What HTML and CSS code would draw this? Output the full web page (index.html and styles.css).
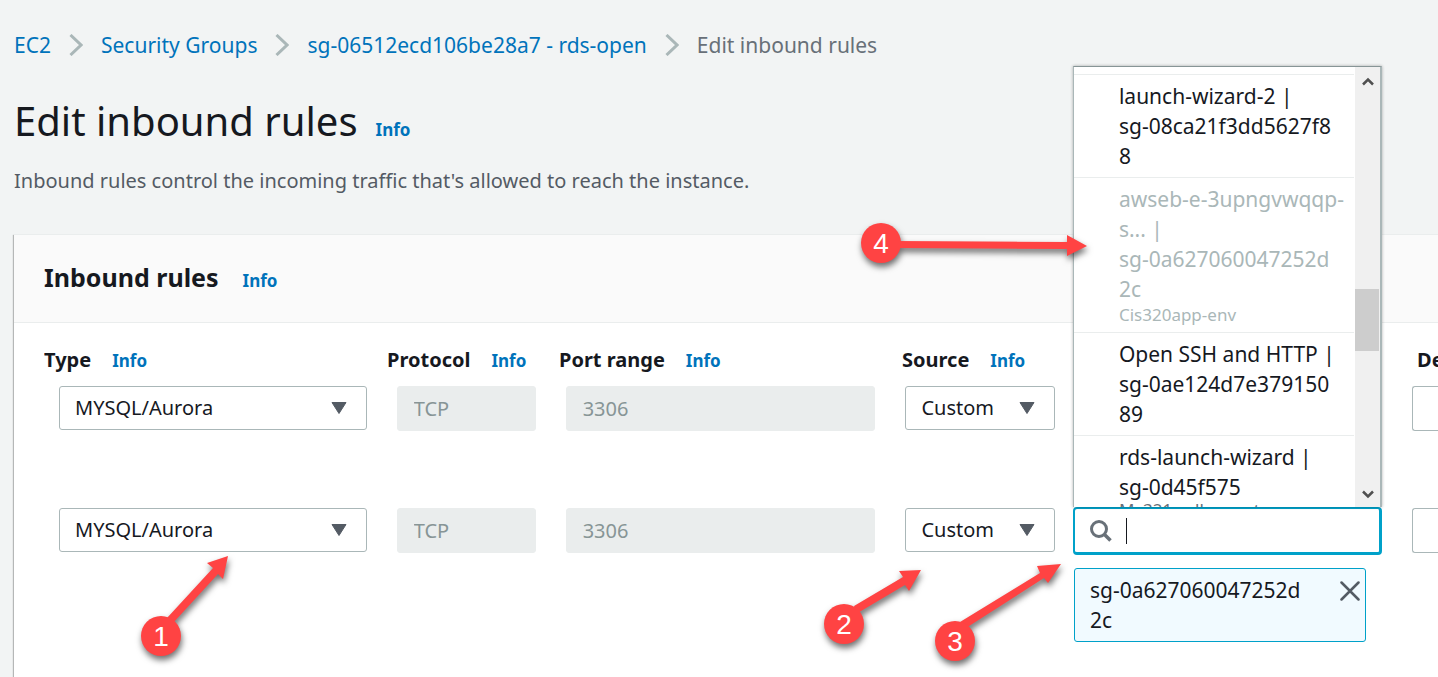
FILE: index.html
```html
<!DOCTYPE html>
<html lang="en">
<head>
<meta charset="utf-8">
<title>Edit inbound rules</title>
<link rel="stylesheet" href="styles.css">
</head>
<body>
<svg class="defs" width="0" height="0" aria-hidden="true">
  <symbol id="chevron" viewBox="0 0 14 22"><path d="M1.500 1 12 11 1.500 21" fill="none" stroke="#aab7b8" stroke-width="3"/></symbol>
  <symbol id="caret" viewBox="0 0 16 12"><path d="M1 .5h14L8 11.500z" fill="#545b64" stroke="#545b64" stroke-linejoin="round"/></symbol>
</svg>
<main class="page">
  <nav class="crumbs" aria-label="Breadcrumb">
    <a href="#">EC2</a>
    <svg class="chevron"><use href="#chevron"/></svg>
    <a href="#">Security Groups</a>
    <svg class="chevron"><use href="#chevron"/></svg>
    <a href="#">sg-06512ecd106be28a7 - rds-open</a>
    <svg class="chevron"><use href="#chevron"/></svg>
    <span class="current">Edit inbound rules</span>
  </nav>
  <header class="heading">
    <h1>Edit inbound rules</h1>
    <a class="info" href="#">Info</a>
  </header>
  <p class="lead">Inbound rules control the incoming traffic that's allowed to reach the instance.</p>

  <section class="panel">
    <header class="panel-head">
      <h2>Inbound rules</h2>
      <a class="info" href="#">Info</a>
    </header>
    <div class="labels">
      <div class="label"><span id="l-type">Type</span><a class="info" href="#">Info</a></div>
      <div class="label"><span id="l-proto">Protocol</span><a class="info" href="#">Info</a></div>
      <div class="label"><span id="l-port">Port range</span><a class="info" href="#">Info</a></div>
      <div class="label"><span id="l-source">Source</span><a class="info" href="#">Info</a></div>
      <div class="label"><span id="l-desc">Description</span></div>
    </div>
    <div class="rule">
      <div class="select"><select aria-labelledby="l-type"><option>MYSQL/Aurora</option></select><svg><use href="#caret"/></svg></div>
      <input class="field" aria-labelledby="l-proto" value="TCP" disabled>
      <input class="field" aria-labelledby="l-port" value="3306" disabled>
      <div class="source">
        <div class="select"><select aria-labelledby="l-source"><option>Custom</option></select><svg><use href="#caret"/></svg></div>
      </div>
      <input class="field desc" aria-labelledby="l-desc">
    </div>
    <div class="rule">
      <div class="select"><select aria-labelledby="l-type"><option>MYSQL/Aurora</option></select><svg><use href="#caret"/></svg></div>
      <input class="field" aria-labelledby="l-proto" value="TCP" disabled>
      <input class="field" aria-labelledby="l-port" value="3306" disabled>
      <div class="source">
        <div class="select"><select aria-labelledby="l-source"><option>Custom</option></select><svg><use href="#caret"/></svg></div>
        <div class="lookup">
          <div class="search">
            <svg class="glass" viewBox="0 0 22 22"><circle cx="9" cy="9" r="7.500" fill="none" stroke="#687078" stroke-width="3"/><path d="m14.500 14.500 6 6" stroke="#687078" stroke-width="3.500"/></svg>
            <span class="cursor"></span>
            <input type="text" aria-label="Search source">
            <div class="dropdown">
              <ul class="options">
                <li>launch-wizard-2 |<br>sg-08ca21f3dd5627f8<br>8</li>
                <li class="off">awseb-e-3upngvwqqp-<br>s... |<br>sg-0a627060047252d<br>2c<small>Cis320app-env</small></li>
                <li>Open SSH and HTTP |<br>sg-0ae124d7e379150<br>89</li>
                <li>rds-launch-wizard |<br>sg-0d45f575<small>My321wall-recent</small></li>
              </ul>
              <div class="scrollbar">
                <svg viewBox="0 0 14 10"><path d="M2 8.500 7 3.500l5 5" fill="none" stroke="#505050" stroke-width="2.500"/></svg>
                <div class="thumb"></div>
                <svg viewBox="0 0 14 10"><path d="M2 1.500l5 5 5-5" fill="none" stroke="#505050" stroke-width="2.500"/></svg>
              </div>
            </div>
          </div>
          <div class="token">
            <span>sg-0a627060047252d<br>2c</span>
            <button type="button" aria-label="Remove"><svg viewBox="0 0 20 20"><path d="m1.500 1.500 17 17m0-17-17 17" stroke="#545b64" stroke-width="2.500" stroke-linecap="round"/></svg></button>
          </div>
        </div>
      </div>
      <input class="field desc" aria-labelledby="l-desc">
    </div>
  </section>
</main>
<svg class="notes" width="1438" height="677" viewBox="0 0 1438 677">
  <g class="note"><path d="m167 618 46-50-6-5 21-7-5 23-5-5-45 49z"/><circle cx="161" cy="636" r="20"/></g>
  <g class="note"><path d="m854 606 49-29-4-6 22-1-12 21-4-6-49 29z"/><circle cx="844" cy="624" r="20"/></g>
  <g class="note"><path d="m960 622 80-49-3-7 24-2-13 19-4-5-78 50z"/><circle cx="955" cy="641" r="20"/></g>
  <g class="note"><path d="m895 241 172 1v-7l20 11-20 10v-7l-172-1z"/><circle cx="881" cy="243" r="20"/></g>
  <text x="161" y="646">1</text>
  <text x="844" y="634">2</text>
  <text x="955" y="651">3</text>
  <text x="881" y="253">4</text>
</svg>
</body>
</html>
```
FILE: styles.css
```css
* { box-sizing: border-box; }
body {
  margin: 0;
  min-height: 100vh;
  position: relative;
  overflow: hidden;
  background: #f2f4f4;
  color: #16191f;
  font: 20px/30px "Noto Sans", sans-serif;
}
a { color: #0073bb; text-decoration: none; }
h1, h2, p, ul { margin: 0; padding: 0; }
.defs { position: absolute; }
.page {
  min-height: 100vh;
  padding: 30px 0 0 14px;
  display: flex;
  flex-direction: column;
}
.crumbs { display: flex; align-items: center; gap: 18px; font-size: 21px; white-space: nowrap; }
.chevron { width: 14px; height: 22px; }
.current { color: #687078; }
.heading { display: flex; align-items: baseline; gap: 18px; margin-top: 31px; }
h1 { font-size: 40px; line-height: 60px; font-weight: 400; }
.info { font-size: 17px; font-weight: 700; }
.lead { margin-top: 15px; color: #545b64; }
.panel {
  flex: 1;
  margin-top: 38px;
  background: #fff;
  border-top: 1px solid #eaeded;
  box-shadow: -1px 1px 1px #00000040;
}
.panel-head {
  display: flex;
  align-items: baseline;
  gap: 24px;
  padding: 22px 30px 25px;
  background: #fafafa;
  border-bottom: 1px solid #eaeded;
}
h2 { font-size: 25px; line-height: 40px; }
.labels {
  display: grid;
  grid-template-columns: 343fr 172fr 343fr 515fr 21fr;
  padding: 22px 0 0 30px;
}
.label { display: flex; align-items: baseline; gap: 21px; min-width: 0; overflow: hidden; font-weight: 700; white-space: nowrap; }
.rule {
  display: grid;
  grid-template-columns: 308fr 139fr 310fr 477fr 26fr;
  gap: 30px;
  align-items: start;
  padding: 10px 0 0 45px;
}
.rule + .rule { padding-top: 77px; }
select, input, button { font: inherit; color: inherit; margin: 0; }
.select { position: relative; }
select {
  display: block;
  width: 100%;
  height: 44px;
  padding: 0 15px;
  appearance: none;
  border: 1px solid #aab7b8;
  border-radius: 3px;
  background: #fff;
}
.select svg { position: absolute; right: 20px; top: 16px; width: 16px; height: 12px; pointer-events: none; }
.field { width: 100%; min-width: 0; height: 45px; padding: 0 16px; border: 1px solid #aab7b8; border-radius: 3px; background: #fff; }
.field:disabled { border-color: #eaeded; background: #eaeded; color: #879596; }
.field.desc { padding: 0; border-right: 0; border-radius: 3px 0 0 3px; }
.source { display: grid; grid-template-columns: 150fr 310fr; gap: 18px; align-items: start; }
.lookup { height: 44px; margin-top: -1px; font-size: 21px; }
.search { position: relative; height: 48px; }
.search input {
  display: block;
  width: 100%;
  height: 48px;
  padding: 0 16px 0 52px;
  border: 2px solid #00a1c9;
  border-right-width: 3px;
  border-bottom-width: 3px;
  border-radius: 4px;
  background: #fff;
  outline: 0;
}
.glass { position: absolute; left: 17px; top: 13px; width: 22px; height: 22px; }
.cursor { position: absolute; left: 53px; top: 11px; width: 1px; height: 26px; background: #16191f; }
.dropdown {
  position: absolute;
  left: 0;
  right: 0;
  bottom: 100%;
  height: 441px;
  display: flex;
  overflow: hidden;
  background: #fff;
  border: 1px solid #aab7b8;
  border-width: 1px 2px 0 1px;
  border-top-color: #879596;
  box-shadow: 0 0 3px #00000050;
}
.options { flex: 1; list-style: none; padding: 7px 1px 0 0; white-space: nowrap; }
.options li { padding: 6px 0 6px 45px; border-top: 1px solid #eaeded; }
.options small { display: block; font-size: 17px; line-height: 22px; color: #687078; }
.options li:last-child small { line-height: 16px; }
.options .off, .options .off small { color: #aab7b8; }
.scrollbar {
  width: 25px;
  flex: none;
  padding: 9px 0 7px;
  display: flex;
  flex-direction: column;
  align-items: center;
  background: #f0f0f0;
}
.scrollbar svg { width: 14px; height: 10px; }
.scrollbar svg:last-child { margin-top: auto; }
.thumb { width: 100%; height: 62px; margin-top: 203px; border-right: 1px solid #f0f0f0; background: #cdcdcd; }
.token {
  display: flex;
  justify-content: space-between;
  align-items: start;
  margin: 13px 16px 0 1px;
  padding: 6px 5px 6px 15px;
  background: #f1faff;
  border: 1px solid #00a1c9;
  border-radius: 3px;
}
.token button { display: flex; margin-top: 6px; padding: 0; border: 0; background: none; }
.token svg { width: 20px; height: 20px; }
.notes { position: absolute; left: 0; top: 0; pointer-events: none; font: 28px "Liberation Sans", sans-serif; }
.note { fill: #ff4343; filter: drop-shadow(1px 4px 3px #00000090); }
.notes text { fill: #fff; text-anchor: middle; }
```
